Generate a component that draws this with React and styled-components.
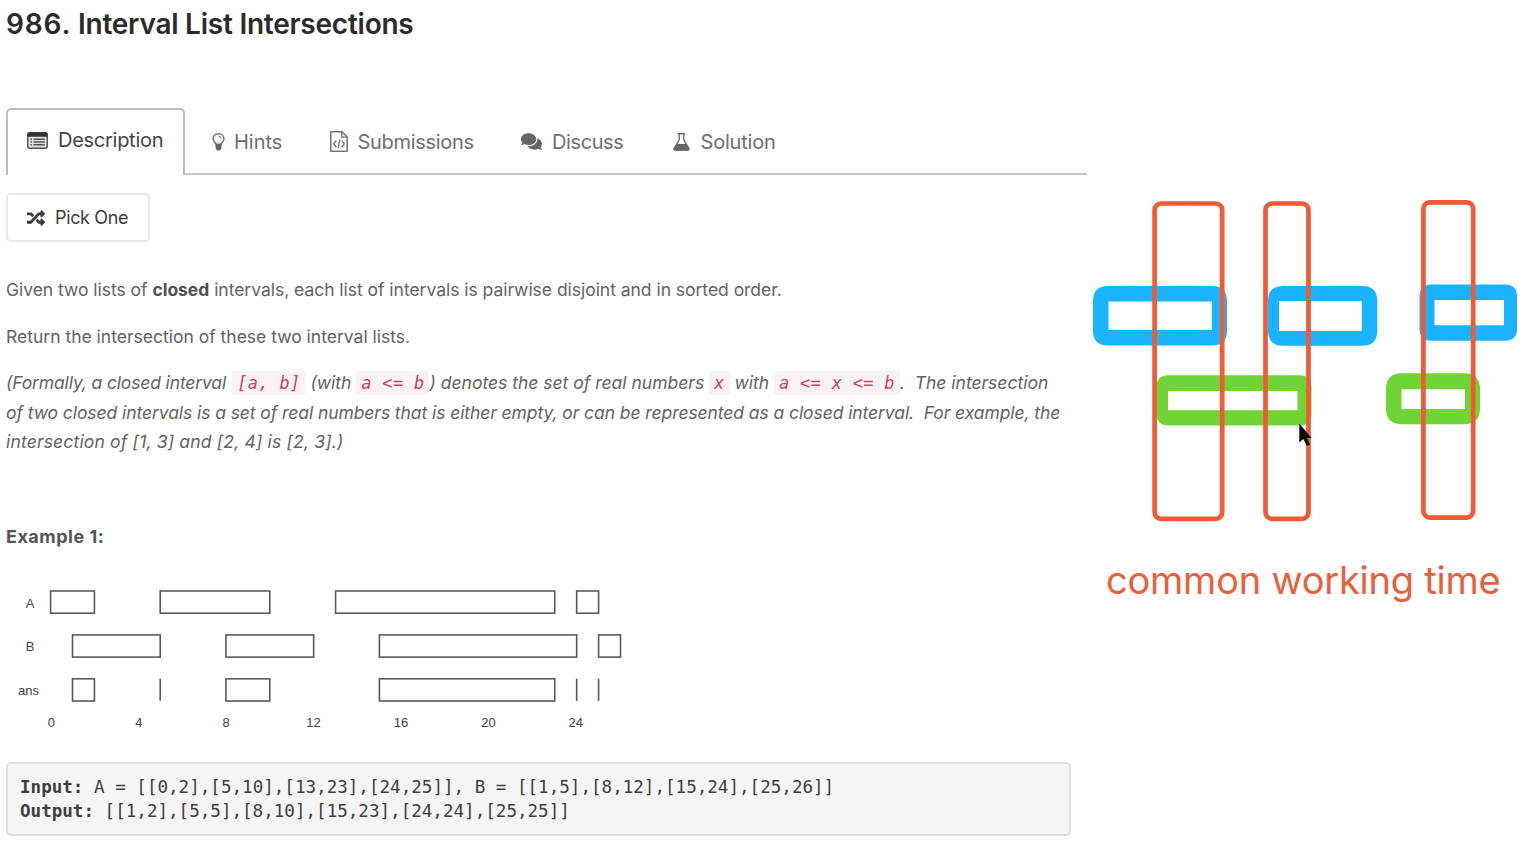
import React from "react";
import styled, { createGlobalStyle } from "styled-components";
import { FaComments, FaRandom } from "react-icons/fa";

const GlobalStyle = createGlobalStyle`
  * { box-sizing: border-box; }
  body {
    margin: 0;
    background: #fefefe;
    font-family: Inter, "Liberation Sans", sans-serif;
    color: #666;
    overflow: hidden;
  }
`;

const Page = styled.div`
  display: flex;
  width: 1531px;
  height: 842px;
`;

const Problem = styled.main`
  width: 1087px;
  display: flex;
  flex-direction: column;
  align-items: flex-start;
`;

const Title = styled.h1`
  margin: 0 0 72px 6px;
  padding-top: 12px;
  height: 36px;
  line-height: 24px;
  font-size: 28px;
  font-weight: 600;
  letter-spacing: -0.24px;
  color: #2b2b2b;
  white-space: nowrap;
`;

const TitleNumber = styled.span`
  letter-spacing: 0.85px;
`;

const Tabs = styled.nav`
  display: flex;
  width: 1081px;
  height: 67px;
  margin-left: 6px;
`;

const Tab = styled.div`
  display: flex;
  align-items: center;
  flex: none;
  width: ${(p) => p.$width}px;
  padding: 2px 0 0 27px;
  border-bottom: 2px solid #c6c6c6;
  font-size: 20px;
  letter-spacing: ${(p) => p.$spacing || 0}px;
  color: #707070;
  white-space: nowrap;
`;

const ActiveTab = styled(Tab)`
  padding: 0 0 5px 19px;
  border: 2px solid #bdbdbd;
  border-bottom: 0;
  border-radius: 5px 5px 0 0;
  color: #444;
`;

const TabRule = styled.div`
  flex: 1;
  border-bottom: 2px solid #c6c6c6;
`;

const IconSlot = styled.span`
  display: flex;
  flex: none;
  width: ${(p) => p.$width}px;
`;

const PickButton = styled.button`
  display: flex;
  align-items: center;
  width: 144px;
  height: 49px;
  margin: 18px 0 0 6px;
  padding: 0 0 0 19px;
  background: #fff;
  border: 2px solid #e8e8e8;
  border-radius: 5px;
  font: 18px Inter, sans-serif;
  letter-spacing: -0.35px;
  color: #3c3c3c;
  white-space: nowrap;
`;

const Paragraph = styled.p`
  margin: ${(p) => p.$top}px 0 0 6px;
  font-size: 17.5px;
  line-height: 29px;
  font-style: ${(p) => (p.$italic ? "italic" : "normal")};
  color: #636363;
`;

const Line = styled.span`
  display: block;
  height: 29.3px;
  white-space: pre;
  letter-spacing: ${(p) => p.$spacing || 0}px;
`;

const Tight = styled.span`
  margin-right: 1.5px;
  letter-spacing: -0.14px;
`;

const Strong = styled.strong`
  font-weight: 700;
  color: #505050;
`;

const Code = styled.code`
  padding: 2px 5px;
  background: #f9f2f4;
  border-radius: 3px;
  font-family: "DejaVu Sans Mono", monospace;
  font-size: 17px;
  letter-spacing: 0.28px;
  color: #d0405f;
`;

const ExampleHeading = styled.h2`
  margin: 66.2px 0 17px 6px;
  height: 29px;
  line-height: 29px;
  font-size: 18px;
  font-weight: 700;
  letter-spacing: 0.5px;
  color: #555;
  white-space: nowrap;
`;

const Chart = styled.svg`
  display: block;
  flex: none;
  width: 660px;
  height: 194px;

  rect, line { fill: none; stroke: #5a5a5a; stroke-width: 1.6; }
  text {
    font: 13px "Liberation Sans", sans-serif;
    fill: #444;
    text-anchor: middle;
  }
`;

const Output = styled.pre`
  width: 1065px;
  height: 74px;
  margin: 0 0 0 6px;
  padding: 11px 12px;
  background: #f5f5f5;
  border: 2px solid #dfdfdf;
  border-radius: 5px;
  font: 17.57px/24px "DejaVu Sans Mono", monospace;
  color: #3e3e3e;
`;

const Sketch = styled.aside`
  width: 444px;
  padding-top: 190px;
`;

const Drawing = styled.svg`
  display: block;
  width: 444px;
  height: 350px;
`;

const Caption = styled.div`
  margin: 16px 0 0 19px;
  line-height: 48px;
  font-size: 38px;
  letter-spacing: -0.22px;
  color: #ea5f3c;
  white-space: nowrap;
`;

const ListIcon = () => (
  <svg width="21" height="17" viewBox="0 0 21 17">
    <rect x="0.8" y="0.8" width="19.4" height="15.4" rx="2" fill="#e0e0e0" stroke="#555" strokeWidth="1.5" />
    <path d="M0.5 4.8V2.2Q0.5 0.3 2.4 0.3H18.6Q20.5 0.3 20.5 2.2V4.8Z" fill="#333" />
    <path d="M3.5 7.3H5M3.5 10H5M3.5 12.8H5M6.5 7.3H17.8M6.5 10H17.8M6.5 12.8H17.8" stroke="#555" strokeWidth="1.4" />
  </svg>
);

const BulbIcon = () => (
  <svg width="13" height="18" viewBox="0 0 13 18" fill="none" stroke="#737373">
    <path d="M4.2 12C3.8 9.6 1 8.5 1 5.7C1 2.8 3.4 0.8 6.5 0.8S12 2.8 12 5.7C12 8.5 9.2 9.6 8.8 12" strokeWidth="1.4" />
    <path d="M6.6 3.1Q8.9 3.2 9.3 5.4" strokeWidth="1" />
    <path d="M3.3 10.6H9.7L9.3 15.5L7.8 17.4H5.2L3.7 15.5Z" fill="#666" stroke="none" />
  </svg>
);

const FileCodeIcon = () => (
  <svg width="18" height="21" viewBox="0 0 18 21" fill="none" stroke="#737373">
    <path d="M0.8 0.8H12L17.2 6V20.2H0.8Z" strokeWidth="1.5" strokeLinejoin="round" />
    <path d="M11.8 1V6.2H17" strokeWidth="1.3" />
    <path d="M6.2 9.6L3.6 12.8L6.2 16M11.8 9.6L14.4 12.8L11.8 16M9.9 8.5L8.1 17" strokeWidth="1.3" />
  </svg>
);

const FlaskIcon = () => (
  <svg width="17" height="18" viewBox="0 0 17 18" fill="none" stroke="#666">
    <path d="M4.6 0.8H12.4" strokeWidth="1.4" />
    <path d="M6.2 1V6.8L1.1 15.4Q0.4 17.2 2.2 17.2H14.8Q16.6 17.2 15.9 15.4L10.8 6.8V1" strokeWidth="1.3" />
    <path d="M4 11H13L16 16.2Q16 17.4 14.8 17.4H2.2Q1 17.4 1 16.2Z" fill="#666" stroke="none" />
  </svg>
);

const UNIT = 21.92;
const ORIGIN = 50.6;
const ROWS = [
  { name: "A", top: 23, spans: [[0, 2], [5, 10], [13, 23], [24, 25]] },
  { name: "B", top: 66.9, spans: [[1, 5], [8, 12], [15, 24], [25, 26]] },
  { name: "ans", top: 110.8, spans: [[1, 2], [5, 5], [8, 10], [15, 23], [24, 24], [25, 25]] },
];
const TICKS = [0, 4, 8, 12, 16, 20, 24];
const at = (v) => ORIGIN + v * UNIT;

const IntervalChart = () => (
  <Chart viewBox="0 0 660 194">
    {ROWS.map((row) => (
      <g key={row.name}>
        <text x={row.name === "ans" ? 28.5 : 30} y={row.top + 16.5}>{row.name}</text>
        {row.spans.map(([from, to]) =>
          from === to ? (
            <line key={from} x1={at(from)} x2={at(from)} y1={row.top} y2={row.top + 22} />
          ) : (
            <rect key={from} x={at(from)} y={row.top} width={at(to) - at(from)} height="22.2" />
          )
        )}
      </g>
    ))}
    {TICKS.map((t) => (
      <text key={t} x={51.4 + t * 21.85} y="158.7">{t}</text>
    ))}
  </Chart>
);

const frame = (x1, y1, x2, y2, r, a1, b1, a2, b2) =>
  `M${x1 + r} ${y1}H${x2 - r}Q${x2} ${y1} ${x2} ${y1 + r}V${y2 - r}Q${x2} ${y2} ${x2 - r} ${y2}H${x1 + r}Q${x1} ${y2} ${x1} ${y2 - r}V${y1 + r}Q${x1} ${y1} ${x1 + r} ${y1}ZM${a1} ${b1}V${b2}H${a2}V${b1}Z`;

const BLUE = [
  frame(1093, 286, 1227, 345.6, 15, 1108.5, 301.5, 1212, 330),
  frame(1268, 286, 1377.3, 345.8, 15, 1279, 301, 1361.8, 331),
  frame(1419.5, 284.4, 1517, 340.7, 12, 1434.5, 300, 1504, 325.3),
];
const GREEN = [
  frame(1156.5, 375.3, 1311.5, 425.5, 12, 1168, 391, 1297.5, 410.3),
  frame(1386, 373.3, 1480, 424.2, 16, 1401.5, 389.2, 1465, 409),
];
const RED = [
  [1154.6, 203.5, 67.6],
  [1265.5, 203.5, 43],
  [1423.4, 202.3, 49.8],
];

const OverlapDrawing = () => (
  <Drawing viewBox="1087 190 444 350">
    {BLUE.map((d) => <path key={d} d={d} fill="#1bb3ff" />)}
    {GREEN.map((d) => <path key={d} d={d} fill="#70d336" />)}
    {RED.map(([x, y, w]) => (
      <rect key={x} x={x} y={y} width={w} height="315.3" rx="6.5" fill="none" stroke="#f05a35" strokeWidth="4.7" />
    ))}
    <path d="M1299.3 423.5V442.5L1303.2 439L1307 446L1310 444.4L1307 438H1311.5Z" fill="#0b0b0b" />
  </Drawing>
);

export default function App() {
  return (
    <Page>
      <GlobalStyle />
      <Problem>
        <Title><TitleNumber>986.</TitleNumber> Interval List Intersections</Title>
        <Tabs>
          <ActiveTab $width={179} $spacing={-0.27}>
            <IconSlot $width={31}><ListIcon /></IconSlot>Description
          </ActiveTab>
          <Tab $width={118}><IconSlot $width={22}><BulbIcon /></IconSlot>Hints</Tab>
          <Tab $width={191} $spacing={-0.3}><IconSlot $width={27.5}><FileCodeIcon /></IconSlot>Submissions</Tab>
          <Tab $width={152} $spacing={-0.4}><IconSlot $width={31}><FaComments size={21} color="#666" /></IconSlot>Discuss</Tab>
          <Tab $width={156} $spacing={-0.2}><IconSlot $width={27.5}><FlaskIcon /></IconSlot>Solution</Tab>
          <TabRule />
        </Tabs>
        <PickButton>
          <IconSlot $width={28}><FaRandom size={18} /></IconSlot>Pick One
        </PickButton>
        <Paragraph $top={33}>
          <Line $spacing={-0.03}>Given two lists of <Strong>closed</Strong> intervals, each list of intervals is pairwise disjoint and in sorted order.</Line>
        </Paragraph>
        <Paragraph $top={18}>
          <Line>Return the intersection of these two interval lists.</Line>
        </Paragraph>
        <Paragraph $top={16.8} $italic>
          <Line><Tight>(Formally, a closed interval </Tight><Code>[a, b]</Code> (with <Code>{"a <= b"}</Code>) denotes the set of real numbers <Code>x</Code> with <Code>{"a <= x <= b"}</Code>.  The intersection</Line>
          <Line $spacing={-0.077}>of two closed intervals is a set of real numbers that is either empty, or can be represented as a closed interval.  For example, the</Line>
          <Line $spacing={0.17}>intersection of [1, 3] and [2, 4] is [2, 3].)</Line>
        </Paragraph>
        <ExampleHeading>Example 1:</ExampleHeading>
        <IntervalChart />
        <Output>
          <b>Input:</b>{" A = [[0,2],[5,10],[13,23],[24,25]], B = [[1,5],[8,12],[15,24],[25,26]]\n"}
          <b>Output:</b>{" [[1,2],[5,5],[8,10],[15,23],[24,24],[25,25]]"}
        </Output>
      </Problem>
      <Sketch>
        <OverlapDrawing />
        <Caption>common working time</Caption>
      </Sketch>
    </Page>
  );
}
